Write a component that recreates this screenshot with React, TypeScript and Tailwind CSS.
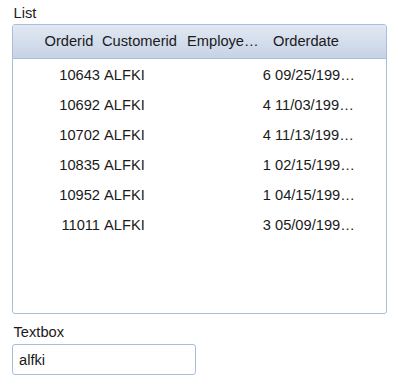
import React from 'react';

const orders = [
  { id: 10643, customer: 'ALFKI', employee: 6, date: '09/25/1997 12:00:00 AM' },
  { id: 10692, customer: 'ALFKI', employee: 4, date: '11/03/1997 12:00:00 AM' },
  { id: 10702, customer: 'ALFKI', employee: 4, date: '11/13/1997 12:00:00 AM' },
  { id: 10835, customer: 'ALFKI', employee: 1, date: '02/15/1998 12:00:00 AM' },
  { id: 10952, customer: 'ALFKI', employee: 1, date: '04/15/1998 12:00:00 AM' },
  { id: 11011, customer: 'ALFKI', employee: 3, date: '05/09/1998 12:00:00 AM' },
];

const cols = 'grid grid-cols-[29px_58px_85px_86px_86px]';

export default function App() {
  return (
    <div
      className="min-h-[386px] w-[398px] bg-white px-[12px] pt-[5px] text-[14.67px] leading-[17px] text-[#1a1a1a]"
      style={{ fontFamily: '"Liberation Sans", Arial, sans-serif' }}
    >
      {/* List */}
      <div className="pl-[1.5px]">List</div>
      <div className="mt-[2px] h-[290px] w-[375px] overflow-hidden rounded-[3px] border border-[#a9bedb]">
        <div className={`${cols} h-[34px] items-center border-b border-[#a9bedb] bg-gradient-to-b from-[#e2e8f2] to-[#c6d3e6]`}>
          <div />
          <div className="pl-[2.5px]">Orderid</div>
          <div className="pl-[2px]">Customerid</div>
          <div className="pl-[2px]">
            <span className="block w-[72px] truncate">Employeeid</span>
          </div>
          <div className="pl-[2px]">Orderdate</div>
        </div>
        <div className="pt-[1px]">
          {orders.map((o) => (
            <div key={o.id} className={`${cols} h-[30px] items-center`}>
              <div />
              <div className="text-right">{o.id}</div>
              <div className="pl-[4px]">{o.customer}</div>
              <div className="text-right">{o.employee}</div>
              <div className="pl-[4px]">
                <span className="block w-[82px] truncate">{o.date}</span>
              </div>
            </div>
          ))}
        </div>
      </div>

      {/* Textbox */}
      <div className="mt-[10px] pl-[1.5px]">Textbox</div>
      <input
        className="mt-[3px] h-[31px] w-[184px] rounded-[3px] border border-[#a9bedb] bg-white px-[6px] text-[14.67px] text-[#1a1a1a] outline-none"
        style={{ fontFamily: '"Liberation Sans", Arial, sans-serif' }}
        defaultValue="alfki"
      />
    </div>
  );
}
